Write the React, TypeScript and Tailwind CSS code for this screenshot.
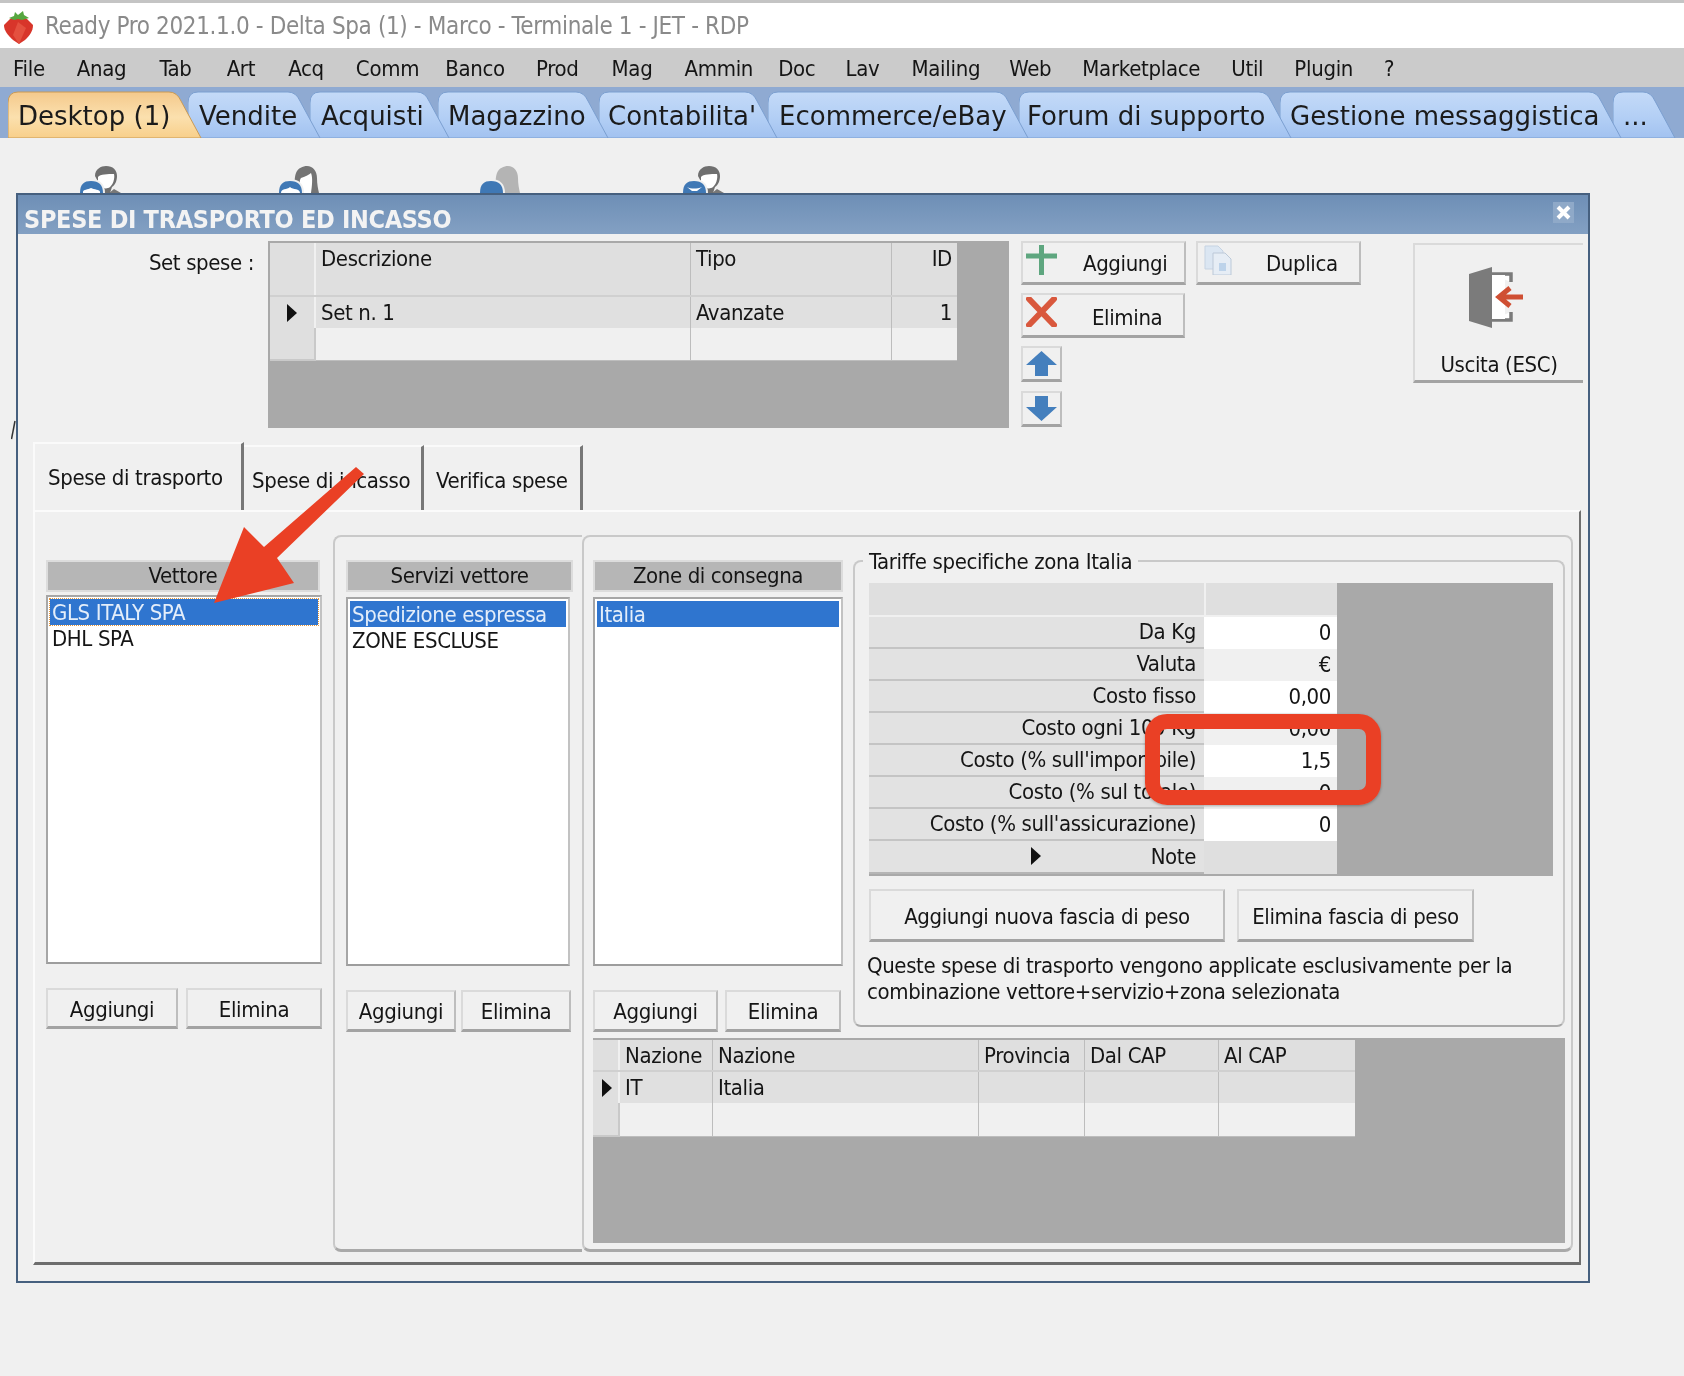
import type { ReactNode } from 'react';

const tabs = [
  { label: 'Desktop (1)', w: 195, cls: 'ml-[8px] z-[9] pl-[10px]', active: true },
  { label: 'Vendite', w: 134, cls: '-ml-[15px] z-[8] pl-[11px]' },
  { label: 'Acquisti', w: 141, cls: '-ml-[12px] z-[7] pl-[11px]' },
  { label: 'Magazzino', w: 172, cls: '-ml-[13px] z-[6] pl-[10px]' },
  { label: "Contabilita'", w: 180, cls: '-ml-[11px] z-[5] pl-[9px]' },
  { label: 'Ecommerce/eBay', w: 262, cls: '-ml-[11px] z-[4] pl-[11px]' },
  { label: 'Forum di supporto', w: 274, cls: '-ml-[11px] z-[3] pl-[8px]' },
  { label: 'Gestione messaggistica', w: 343, cls: '-ml-[13px] z-[2] pl-[10px]' },
  { label: '...', w: 64, cls: '-ml-[10px] z-[1] pl-[10px]' },
];

const menu = [
  { label: 'File', cls: '' },
  { label: 'Anag', cls: 'ml-[1px]' },
  { label: 'Tab', cls: 'ml-[2px]' },
  { label: 'Art', cls: 'ml-[4px]' },
  { label: 'Acq', cls: 'ml-[2px]' },
  { label: 'Comm', cls: 'ml-[1px]' },
  { label: 'Banco', cls: '-ml-[5px]' },
  { label: 'Prod', cls: '' },
  { label: 'Mag', cls: 'ml-[2px]' },
  { label: 'Ammin', cls: 'ml-[1px]' },
  { label: 'Doc', cls: '-ml-[6px]' },
  { label: 'Lav', cls: '-ml-[1px]' },
  { label: 'Mailing', cls: 'ml-[1px]' },
  { label: 'Web', cls: '-ml-[2px]' },
  { label: 'Marketplace', cls: '' },
  { label: 'Util', cls: '' },
  { label: 'Plugin', cls: '' },
  { label: '?', cls: '' },
];

const tariffe = [
  { label: 'Da Kg', value: '0', bg: 'bg-white' },
  { label: 'Valuta', value: '€', bg: 'bg-[#f0f0f0]' },
  { label: 'Costo fisso', value: '0,00', bg: 'bg-white' },
  { label: 'Costo ogni 100 Kg', value: '0,00', bg: 'bg-[#f0f0f0]' },
  { label: 'Costo (% sull\'imponibile)', value: '1,5', bg: 'bg-white' },
  { label: 'Costo (% sul totale)', value: '0', bg: 'bg-[#f0f0f0]' },
  { label: 'Costo (% sull\'assicurazione)', value: '0', bg: 'bg-white' },
];

function Tab({ label, w, cls, active }: { label: string; w: number; cls: string; active?: boolean }) {
  const id = active ? 'tabActive' : 'tabIdle';
  return (
    <div className={`relative flex h-[47px] shrink-0 items-center ${cls}`} style={{ width: w }}>
      <svg className="absolute inset-0 h-full w-full" viewBox={`0 0 ${w} 47`}>
        <defs>
          <linearGradient id={id} x1="0" y1="0" x2="0" y2="1">
            <stop offset="0" stopColor={active ? '#f4c98c' : '#c4daf8'} />
            <stop offset="0.55" stopColor={active ? '#fbe0ae' : '#b3cff5'} />
            <stop offset="1" stopColor={active ? '#f8cf8a' : '#a2c2f0'} />
          </linearGradient>
        </defs>
        <path
          d={`M0 47 V12 Q0 1 10 1 H${w - 34} Q${w - 26} 1 ${w - 22} 10 L${w - 2} 47 Z`}
          fill={`url(#${id})`}
          stroke={active ? '#c99a55' : '#7b9fd0'}
          strokeWidth="1"
        />
      </svg>
      <span className="relative pt-[2px] font-['DejaVu_Sans',sans-serif] text-[26px] tracking-normal text-[#1b1b1b]">{label}</span>
    </div>
  );
}

// the desktop shortcuts behind the dialog, only their tops show
function Persons({ kind }: { kind: 'man' | 'woman' | 'faded' | 'band' }) {
  const hair = kind === 'faded' ? '#b4b4b4' : kind === 'woman' ? '#747474' : '#6f6f6f';
  return (
    <svg width="42" height="27" viewBox="0 0 42 27" className="shrink-0">
      {kind === 'man' || kind === 'band' ? (
        <>
          <path d="M29 27 L34 23 L41 27 Z" fill="#777" />
          <path d="M15 10 C15 3 21 0 26 0 C33 0 37 4 37 10 C37 15 35 19 32 21 L30 27 H24 Z" fill={hair} />
          <path d="M18 11 C20 8 28 8 34 8 C35 13 33 18 30 21 C26 24 20 22 18 17 Z" fill="#fff" />
        </>
      ) : (
        <>
          <path d="M14 27 C16 20 15 12 17 7 C19 2 24 0 28 0 C34 0 38 5 38 12 C38 18 39 23 40 27 Z" fill={hair} />
          {kind === 'woman' && <path d="M20 27 C21 20 20 14 22 12 C27 10 30 9 32 7 C34 12 33 20 32 27 Z" fill="#fff" />}
        </>
      )}
      <path d="M-2 27 C-2 18 2 13 11 13 C20 13 25 18 25 27 Z" fill="#f0f0f0" />
      <path d="M0 27 C0 18 4 15 11 15 C19 15 23 19 23 27 Z" fill="#3f78b5" />
      {kind === 'man' && <path d="M3 26 C3 23 8 24 11 22 C14 24 20 23 20 26 V27 H3 Z" fill="#fff" />}
      {kind === 'woman' && <path d="M2 27 C2 22 8 24 11 21 C14 24 21 22 21 27 Z" fill="#fff" />}
      {kind === 'band' && <path d="M4 21 C8 23 14 23 19 21 L14 25 H9 Z" fill="#fff" />}
    </svg>
  );
}

function WinButton({ className, children }: { className: string; children: ReactNode }) {
  return (
    <div className={`flex shrink-0 items-center border-t-2 border-r-2 border-b-[3px] border-l-2 border-t-[#dadada] border-r-[#bdbdbd] border-b-[#a3a3a3] border-l-[#dadada] bg-[#f0f0f0] pt-[3px] ${className}`}>
      {children}
    </div>
  );
}

function ListColumn({ title, items, headW, listW, dotted, gapTop, gapBtn, btnCls, btnGap }: {
  title: string; items: string[]; headW: string; listW: string; dotted?: boolean; gapTop: string; gapBtn: string; btnCls: [string, string]; btnGap: string;
}) {
  return (
    <div className="flex flex-col">
      <div className={`flex h-[32px] items-center justify-center border-2 border-[#dcdcdc] bg-[#b6b6b6] ${headW}`}>{title}</div>
      <div className={`h-[369px] border-2 border-t-[#a6a6a6] border-r-[#c2c2c2] border-b-[#9d9d9d] border-l-[#a6a6a6] bg-white p-[2px] ${gapTop} ${listW}`}>
        {items.map((it, i) => (
          <div
            key={it}
            className={`flex h-[26px] items-center px-[2px] pt-[1px] ${i === 0 ? `bg-[#2f75cf] text-[#e4eefa] ${dotted ? 'outline-1 outline-dotted outline-[#e6963a]' : ''}` : ''}`}
          >
            {it}
          </div>
        ))}
      </div>
      <div className={`flex ${gapBtn} ${btnGap}`}>
        <WinButton className={`justify-center ${btnCls[0]}`}>Aggiungi</WinButton>
        <WinButton className={`justify-center ${btnCls[1]}`}>Elimina</WinButton>
      </div>
    </div>
  );
}

function Triangle({ className }: { className: string }) {
  return (
    <svg className={className} viewBox="0 0 10 18">
      <path d="M0 0 L10 9 L0 18 Z" fill="#111" />
    </svg>
  );
}

export default function App() {
  return (
    <div className="relative h-[1376px] w-[1684px] overflow-hidden bg-[#f0f0f0] font-['DejaVu_Sans_Condensed','Liberation_Sans',sans-serif] text-[22px] leading-none tracking-[-0.38px] text-[#151515] blur-[0.4px]">
      <div className="h-[3px] bg-[#c4c4c4]" />
      <div className="flex h-[45px] items-center bg-white pl-[4px]">
        <svg width="29" height="33" viewBox="0 0 29 33" className="mt-[4px] shrink-0">
          <path d="M6 8 C10 6 19 6 23 8 L29 14 C29 20 26 24 21 29 L15 33 L9 29 C4 24 0 20 0 14 Z" fill="#d8352a" />
          <path d="M14 11 L22 17 L15 33 L9 24 Z" fill="#e4503f" />
          <path d="M5 7 L10 5 L11 1 L14 4 L19 0 L20 4 L25 7 L18 9 L14 8 L10 9 Z" fill="#56a63f" />
        </svg>
        <span className="ml-[12px] text-[24px] tracking-[-0.37px] text-[#8a8a8a]">Ready Pro 2021.1.0 - Delta Spa (1) - Marco - Terminale 1 - JET - RDP</span>
      </div>
      <div className="flex h-[39px] items-center gap-[31px] bg-[#cbcbcb] pt-[2px] pl-[13px] tracking-[-0.3px]">
        {menu.map((m) => <span key={m.label} className={m.cls}>{m.label}</span>)}
      </div>
      <div className="flex h-[51px] items-end bg-[#8faad2]">
        {tabs.map((t) => <Tab key={t.label} {...t} />)}
      </div>

      <div className="mt-[27px] flex h-[28px] items-end overflow-hidden">
        <div className="ml-[80px]"><Persons kind="man" /></div>
        <div className="ml-[157px]"><Persons kind="woman" /></div>
        <div className="ml-[159px]"><Persons kind="faded" /></div>
        <div className="ml-[161px]"><Persons kind="band" /></div>
      </div>

      {/* dialog */}
      <div className="ml-[16px] flex h-[1090px] w-[1574px] flex-col border-2 border-[#46607f] bg-[#f0f0f0]">
        <div className="flex h-[39px] shrink-0 items-center justify-between bg-gradient-to-b from-[#6e8fb6] to-[#83a0c3] pr-[14px] pl-[6px]">
          <span className="pt-[9px] text-[25px] font-bold tracking-[-0.3px] text-[#f3f3f3]">SPESE DI TRASPORTO ED INCASSO</span>
          <span className="-mt-[5px] flex h-[21px] w-[21px] items-center justify-center bg-[#8fa9c8]">
            <svg width="15" height="15" viewBox="0 0 15 15"><path d="M2 2 L13 13 M13 2 L2 13" stroke="#fff" strokeWidth="4" /></svg>
          </span>
        </div>

        <div className="flex h-[194px] shrink-0 pt-[7px]">
          <div className="w-[236px] pt-[11px] text-right">Set spese :</div>
          <div className="ml-[14px] flex h-[187px] w-[741px] flex-col bg-[#a9a9a9] pt-[2px] pl-[2px]">
            <div className="flex h-[52px] w-[687px]">
              <div className="w-[46px] border-r-2 border-[#f0f0f0] bg-[#dfdfdf]" />
              <div className="w-[375px] border-r border-[#bdbdbd] bg-[#dfdfdf] pt-[5px] pl-[5px]">Descrizione</div>
              <div className="w-[201px] border-r border-[#bdbdbd] bg-[#dfdfdf] pt-[5px] pl-[5px]">Tipo</div>
              <div className="w-[65px] bg-[#dfdfdf] pt-[5px] pr-[5px] text-right">ID</div>
            </div>
            <div className="flex h-[33px] w-[687px] border-t-2 border-[#d0d0d0]">
              <div className="flex w-[46px] items-center border-r-2 border-[#f0f0f0] bg-[#dfdfdf] pl-[17px]"><Triangle className="h-[18px] w-[10px]" /></div>
              <div className="flex w-[375px] items-center border-r border-[#bdbdbd] bg-[#e0e0e0] pl-[5px]">Set n. 1</div>
              <div className="flex w-[201px] items-center border-r border-[#bdbdbd] bg-[#e0e0e0] pl-[5px]">Avanzate</div>
              <div className="flex w-[65px] items-center justify-end bg-[#e0e0e0] pr-[5px]">1</div>
            </div>
            <div className="flex h-[33px] w-[687px]">
              <div className="w-[46px] border-r-2 border-b-2 border-[#c9c9c9] bg-[#dfdfdf]" />
              <div className="w-[375px] border-r border-b border-[#bdbdbd] bg-[#f0f0f0]" />
              <div className="w-[201px] border-r border-b border-[#bdbdbd] bg-[#f0f0f0]" />
              <div className="w-[65px] border-b border-[#bdbdbd] bg-[#f0f0f0]" />
            </div>
          </div>

          <div className="ml-[12px] flex w-[341px] flex-col">
            <div className="flex gap-[10px]">
              <WinButton className="h-[44px] w-[165px] pl-[3px]">
                <svg width="31" height="30" viewBox="0 0 31 30" className="-mt-[9px] shrink-0"><path d="M15.5 0 V30 M0 11 H31" stroke="#5ea67f" strokeWidth="5" fill="none" /></svg>
                <span className="ml-[26px]">Aggiungi</span>
              </WinButton>
              <WinButton className="h-[44px] w-[165px] pl-[5px]">
                <svg width="29" height="30" viewBox="0 0 29 30" className="-mt-[9px] shrink-0">
                  <path d="M2 1 H15 L20 6 V24 H2 Z" fill="#dbe6f2" stroke="#c6d3e2" />
                  <path d="M10 8 H22 L28 14 V30 H10 Z" fill="#e6edf5" stroke="#bcc9d8" />
                  <path d="M16 18 H23 V26 H16 Z" fill="#bdd3ea" />
                </svg>
                <span className="ml-[34px]">Duplica</span>
              </WinButton>
            </div>
            <WinButton className="mt-[8px] h-[45px] w-[164px] pl-[3px]">
              <svg width="31" height="30" viewBox="0 0 31 30" className="-mt-[9px] shrink-0"><path d="M3 2 L28 28 M28 2 L3 28" stroke="#d9583d" strokeWidth="6" strokeLinecap="round" fill="none" /></svg>
              <span className="mt-[3px] ml-[35px]">Elimina</span>
            </WinButton>
            <WinButton className="mt-[8px] h-[36px] w-[41px] justify-center">
              <svg width="31" height="25" viewBox="0 0 31 25" className="-mt-[3px]"><path d="M15.5 0 L31 14 H22 V25 H9 V14 H0 Z" fill="#447fbd" /></svg>
            </WinButton>
            <WinButton className="mt-[9px] h-[36px] w-[41px] justify-center">
              <svg width="31" height="25" viewBox="0 0 31 25" className="-mt-[3px]"><path d="M9 0 H22 V11 H31 L15.5 25 L0 11 H9 Z" fill="#447fbd" /></svg>
            </WinButton>
          </div>

          <div className="mt-[2px] ml-[51px] flex h-[140px] w-[170px] flex-col items-center border-t-2 border-b-[3px] border-l-2 border-t-[#dadada] border-b-[#a3a3a3] border-l-[#dadada]">
            <svg width="56" height="62" viewBox="0 0 56 62" className="mt-[22px] ml-[-4px]">
              <path d="M22 7 H42 V15 M22 53 H42 V45" stroke="#7b7b7b" strokeWidth="3.5" fill="#fff" />
              <path d="M22 8 H36 V52 H22 Z" fill="#fff" />
              <path d="M0 7 L23 0 V61 L0 54 Z" fill="#7b7b7b" />
              <path d="M54 30 H34 M41 21 L30 30 L41 39" stroke="#cf4f33" strokeWidth="5" fill="none" />
            </svg>
            <span className="mt-[25px]">Uscita (ESC)</span>
          </div>
        </div>

        {/* tabs */}
        <div className="mt-[14px] ml-[15px] flex h-[68px] shrink-0 items-end">
          <div className="flex h-[68px] w-[211px] items-center border-t-2 border-r-[3px] border-l-2 border-t-[#fafafa] border-r-[#777] border-l-[#fafafa] pt-[2px] pl-[13px]">Spese di trasporto</div>
          <div className="flex h-[65px] w-[180px] items-center border-t-2 border-r-[3px] border-t-[#fafafa] border-r-[#777] pt-[4px] pl-[8px]">Spese di incasso</div>
          <div className="flex h-[65px] w-[159px] items-center border-t-2 border-r-[3px] border-t-[#fafafa] border-r-[#777] pt-[4px] pl-[12px]">Verifica spese</div>
        </div>

        <div className="ml-[15px] flex h-[755px] w-[1548px] shrink-0 border-t-2 border-r-2 border-b-[3px] border-l-2 border-t-[#fbfbfb] border-r-[#6f6f6f] border-b-[#6d6d6d] border-l-[#fbfbfb]">
          <div className="w-[298px] shrink-0 pt-[48px] pl-[11px]">
            <ListColumn
              title="Vettore"
              items={['GLS ITALY SPA', 'DHL SPA']}
              headW="w-[274px]"
              listW="w-[276px]"
              dotted
              gapTop="mt-[3px]"
              gapBtn="mt-[24px]"
              btnGap="gap-[8px]"
              btnCls={['h-[41px] w-[132px]', 'h-[41px] w-[136px]']}
            />
          </div>

          <div className="mt-[23px] h-[717px] w-[249px] shrink-0 rounded-l-[8px] border-t-2 border-b-[3px] border-l-2 border-t-[#c9c9c9] border-b-[#a9a9a9] border-l-[#c9c9c9] pt-[23px] pl-[11px]">
            <ListColumn
              title="Servizi vettore"
              items={['Spedizione espressa', 'ZONE ESCLUSE']}
              headW="w-[227px]"
              listW="w-[224px]"
              gapTop="mt-[5px]"
              gapBtn="mt-[24px]"
              btnGap="gap-[5px]"
              btnCls={['h-[42px] w-[110px]', 'h-[42px] w-[110px]']}
            />
          </div>

          <div className="mt-[23px] flex h-[717px] w-[991px] shrink-0 flex-col rounded-[8px] border-t-2 border-r-2 border-b-[3px] border-l-2 border-t-[#c9c9c9] border-r-[#c9c9c9] border-b-[#a9a9a9] border-l-[#c9c9c9] pt-[23px] pl-[9px]">
            <div className="flex h-[472px]">
              <ListColumn
                title="Zone di consegna"
                items={['Italia']}
                headW="w-[250px]"
                listW="w-[250px]"
                gapTop="mt-[5px]"
                gapBtn="mt-[24px]"
                btnGap="gap-[7px]"
                btnCls={['h-[42px] w-[125px]', 'h-[42px] w-[116px]']}
              />
              <div className="relative ml-[10px] h-[467px] w-[712px] rounded-[8px] border-2 border-[#c9c9c9] border-b-[#a9a9a9] pt-[21px] pl-[14px]">
                <span className="absolute -top-[13px] left-[8px] bg-[#f0f0f0] px-[6px] py-[2px]">Tariffe specifiche zona Italia</span>
                <div className="flex h-[293px] w-[684px] bg-[#a9a9a9]">
                  <div className="flex w-[468px] flex-col">
                    <div className="flex h-[34px] border-b-2 border-[#f0f0f0]">
                      <div className="w-[335px] bg-[#dfdfdf]" />
                      <div className="w-[133px] border-l-2 border-[#f0f0f0] bg-[#dfdfdf]" />
                    </div>
                    {tariffe.map((r) => (
                      <div key={r.label} className="flex h-[32px]">
                        <div className="flex w-[335px] items-center justify-end border-b-2 border-b-[#c4c4c4] bg-[#e2e2e2] pr-[8px]">{r.label}</div>
                        <div className={`flex w-[133px] items-center justify-end pr-[6px] ${r.bg}`}>{r.value}</div>
                      </div>
                    ))}
                    <div className="flex h-[33px]">
                      <div className="relative flex w-[335px] items-center justify-end border-b-2 border-b-[#b5b5b5] bg-[#e2e2e2] pr-[8px]">
                        <Triangle className="absolute top-[6px] left-[162px] h-[18px] w-[10px]" />
                        Note
                      </div>
                      <div className="w-[133px] bg-[#dfdfdf]" />
                    </div>
                  </div>
                </div>
                <div className="mt-[13px] flex gap-[12px]">
                  <WinButton className="h-[53px] w-[356px] justify-center">Aggiungi nuova fascia di peso</WinButton>
                  <WinButton className="h-[53px] w-[237px] justify-center">Elimina fascia di peso</WinButton>
                </div>
                <p className="mt-[11px] -ml-[2px] w-[680px] leading-[26px]">
                  Queste spese di trasporto vengono applicate esclusivamente per la combinazione vettore+servizio+zona selezionata
                </p>
              </div>
            </div>

            <div className="mt-[6px] h-[205px] w-[972px] bg-[#a9a9a9] pt-[2px]">
              <div className="flex h-[30px] w-[762px]">
                <div className="w-[27px] border-r-2 border-[#f0f0f0] bg-[#dfdfdf]" />
                <div className="flex w-[93px] items-center border-r border-[#bdbdbd] bg-[#dfdfdf] pt-[2px] pl-[5px]">Nazione</div>
                <div className="flex w-[266px] items-center border-r border-[#bdbdbd] bg-[#dfdfdf] pt-[2px] pl-[5px]">Nazione</div>
                <div className="flex w-[106px] items-center border-r border-[#bdbdbd] bg-[#dfdfdf] pt-[2px] pl-[5px]">Provincia</div>
                <div className="flex w-[134px] items-center border-r border-[#bdbdbd] bg-[#dfdfdf] pt-[2px] pl-[5px]">Dal CAP</div>
                <div className="flex w-[136px] items-center bg-[#dfdfdf] pt-[2px] pl-[5px]">Al CAP</div>
              </div>
              <div className="flex h-[33px] w-[762px] border-t-2 border-[#d0d0d0]">
                <div className="flex w-[27px] items-center border-r-2 border-[#f0f0f0] bg-[#dfdfdf] pl-[9px]"><Triangle className="h-[18px] w-[10px]" /></div>
                <div className="flex w-[93px] items-center border-r border-[#bdbdbd] bg-[#e0e0e0] pl-[5px]">IT</div>
                <div className="flex w-[266px] items-center border-r border-[#bdbdbd] bg-[#e0e0e0] pl-[5px]">Italia</div>
                <div className="w-[106px] border-r border-[#bdbdbd] bg-[#e0e0e0]" />
                <div className="w-[134px] border-r border-[#bdbdbd] bg-[#e0e0e0]" />
                <div className="w-[136px] bg-[#e0e0e0]" />
              </div>
              <div className="flex h-[34px] w-[762px]">
                <div className="w-[27px] border-r-2 border-b-2 border-[#c9c9c9] bg-[#dfdfdf]" />
                <div className="w-[93px] border-r border-b border-[#bdbdbd] bg-[#f0f0f0]" />
                <div className="w-[266px] border-r border-b border-[#bdbdbd] bg-[#f0f0f0]" />
                <div className="w-[106px] border-r border-b border-[#bdbdbd] bg-[#f0f0f0]" />
                <div className="w-[134px] border-r border-b border-[#bdbdbd] bg-[#f0f0f0]" />
                <div className="w-[136px] border-b border-[#bdbdbd] bg-[#f0f0f0]" />
              </div>
            </div>
          </div>
        </div>
      </div>

      {/* annotations laid over the screenshot */}
      <div className="absolute top-[714px] left-[1145px] h-[91px] w-[236px] rounded-[22px] border-[15px] border-[#ea4025] shadow-[0_1px_3px_rgba(0,0,0,0.3)]" />
      <svg className="absolute top-[460px] left-[205px]" width="170" height="150" viewBox="205 460 170 150">
        <path d="M356 467 L364 474 L277 558 L294 583 L214 603 L244 527 L264 547 Z" fill="#ea4025" />
      </svg>
      <svg className="absolute top-[420px] left-[11px]" width="5" height="20" viewBox="0 0 5 20">
        <path d="M0.5 19 L4 1" stroke="#333" strokeWidth="1.5" />
      </svg>
    </div>
  );
}
